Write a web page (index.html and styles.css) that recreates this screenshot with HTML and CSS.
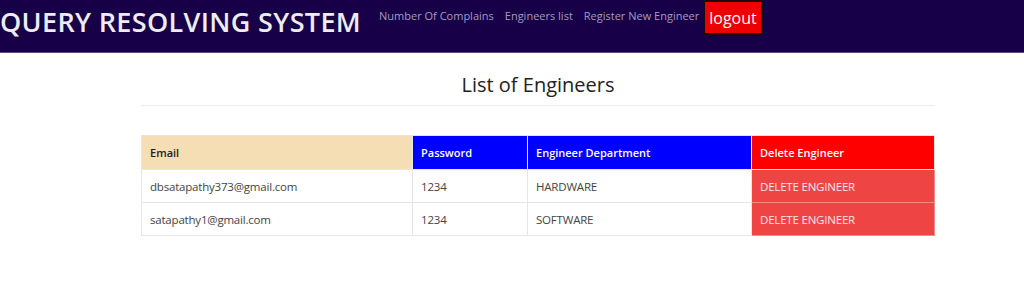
FILE: index.html
```html
<!DOCTYPE html>
<html lang="en">
<head>
  <meta charset="UTF-8" />
  <title>Query Resolving System</title>
  <link rel="stylesheet" href="styles.css">
</head>
<body>

  <div class="navbar">
    <h1 class="brand">QUERY RESOLVING SYSTEM</h1>
    <div class="links">
      <a href="#">Number Of Complains</a>
      <a href="#">Engineers list</a>
      <a href="#">Register New Engineer</a>
    </div>
    <button class="logout">logout</button>
  </div>

  <div class="content">
    <h2>List of Engineers</h2>
    <hr />

    <table class="engineers">
      <thead>
        <tr>
          <th class="email">Email</th>
          <th class="blue">Password</th>
          <th class="blue">Engineer Department</th>
          <th class="red">Delete Engineer</th>
        </tr>
      </thead>
      <tbody>
        <tr>
          <td>dbsatapathy373@gmail.com</td>
          <td>1234</td>
          <td>HARDWARE</td>
          <td class="delete">DELETE ENGINEER</td>
        </tr>
        <tr>
          <td>satapathy1@gmail.com</td>
          <td>1234</td>
          <td>SOFTWARE</td>
          <td class="delete">DELETE ENGINEER</td>
        </tr>
      </tbody>
    </table>
  </div>

</body>
</html>
```

FILE: styles.css
```css
body {
  margin: 0;
  font-family: "Open Sans", Arial, sans-serif;
  background: white;
}
.navbar {
  display: flex;
  align-items: flex-start;
  height: 52px;
  background-color: #170047;
  border-bottom: 1px solid #5a4a8a;
}
.brand {
  margin: 0;
  padding: 3px 0 0 0;
  font-size: 27px;
  font-weight: 600;
  color: #ececf2;
  white-space: nowrap;
  letter-spacing: 0.35px;
}
.links {
  display: flex;
  gap: 11px;
  margin-left: 18px;
  padding-top: 8px;
}
.links a {
  color: #a49cc4;
  font-size: 11px;
  text-decoration: none;
}
.logout {
  margin-left: 4px;
  height: 35px;
  padding: 0 4px;
  background-color: #ef0000;
  color: white;
  border: 2px solid #1a0a10;
  font-family: inherit;
  font-size: 16px;
}
.content {
  width: 794px;
  margin-left: 141px;
}
h2 {
  margin: 18px 0 0 0;
  text-align: center;
  font-size: 20px;
  font-weight: 500;
  color: #222;
}
hr {
  margin: 7px 0 29px 0;
  border: none;
  border-top: 1px solid #ececec;
}
.engineers {
  width: 100%;
  border-collapse: collapse;
  font-size: 11.5px;
  letter-spacing: -0.2px;
}
.engineers th, .engineers td {
  border: 1px solid #e6e6e6;
  height: 32px;
  padding: 0 8px;
  text-align: left;
}
.engineers th {
  font-weight: 600;
  font-size: 11px;
  letter-spacing: 0;
  height: 33px;
}
.engineers td {
  color: #444;
}
.email {
  width: 254px;
  background-color: #f5deb3;
  color: #222;
}
.blue {
  background-color: #0000ff;
  color: white;
  border-color: #3a3aff;
}
.engineers th:nth-child(2) { width: 98px; }
.engineers th:nth-child(3) { width: 207px; }
.red {
  background-color: #ff0000;
  color: white;
}
.engineers td.delete {
  background-color: #ef4444;
  color: #fde8e8;
  border-color: #f28a8a;
}
```
